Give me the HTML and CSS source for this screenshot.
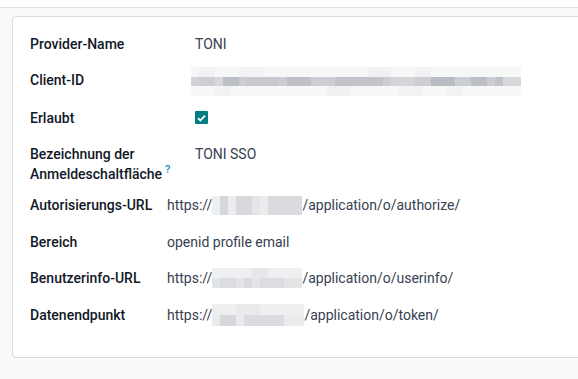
FILE: index.html
```html
<!DOCTYPE html>
<html lang="de">
<head>
    <meta charset="UTF-8">
    <meta name="viewport" content="width=device-width, initial-scale=1.0">
    <title>OAuth-Anbieter</title>
    <link rel="stylesheet" href="styles.css">
</head>
<body>
    <div class="topbar"></div>
    <div class="sheet">
        <div class="group group-main">
            <div class="label">Provider-Name</div>
            <div class="value">TONI</div>

            <div class="label">Client-ID</div>
            <div class="value">
                <svg class="blur-id" width="330" height="29" viewBox="0 0 330 29">
                    <rect x="0" y="0" width="330" height="10" fill="#f6f7f7"/>
                    <rect x="8" y="0" width="16" height="10" fill="#f1f2f3"/>
                    <rect x="48" y="0" width="24" height="10" fill="#f2f3f4"/>
                    <rect x="176" y="0" width="24" height="10" fill="#f0f1f2"/>
                    <rect x="224" y="0" width="16" height="10" fill="#f1f2f3"/>
                    <rect x="0" y="10" width="330" height="9" fill="#ccced3"/>
                    <rect x="0" y="10" width="8" height="9" fill="#d2d3d8"/>
                    <rect x="24" y="10" width="8" height="9" fill="#d8d9dd"/>
                    <rect x="32" y="10" width="16" height="9" fill="#bdc0c6"/>
                    <rect x="56" y="10" width="32" height="9" fill="#c6c8cd"/>
                    <rect x="96" y="10" width="24" height="9" fill="#bfc1c7"/>
                    <rect x="144" y="10" width="48" height="9" fill="#c2c4ca"/>
                    <rect x="200" y="10" width="24" height="9" fill="#d4d6da"/>
                    <rect x="240" y="10" width="24" height="9" fill="#b9bcc3"/>
                    <rect x="280" y="10" width="16" height="9" fill="#bdbfc6"/>
                    <rect x="304" y="10" width="16" height="9" fill="#c0c3c9"/>
                    <rect x="312" y="10" width="18" height="9" fill="#d6d8dc"/>
                    <rect x="0" y="19" width="330" height="10" fill="#f8f8f9"/>
                    <rect x="24" y="19" width="16" height="10" fill="#f2f3f4"/>
                    <rect x="136" y="19" width="24" height="10" fill="#f0f1f2"/>
                    <rect x="208" y="19" width="24" height="10" fill="#f1f2f3"/>
                    <rect x="256" y="19" width="16" height="10" fill="#f2f3f4"/>
                </svg>
            </div>

            <div class="label">Erlaubt</div>
            <div class="value">
                <span class="checkbox">
                    <svg width="9" height="8" viewBox="0 0 9 8"><path d="M1 4.2 3.4 6.4 8 1.6" fill="none" stroke="#fff" stroke-width="1.8"/></svg>
                </span>
            </div>

            <div class="label">Bezeichnung der Anmeldeschaltfläche<sup class="help">?</sup></div>
            <div class="value">TONI SSO</div>
        </div>

        <div class="group group-urls">
            <div class="label">Autorisierungs-URL</div>
            <div class="value">https://<svg class="blur-url" width="90" height="19" viewBox="0 0 90 19">
                    <rect width="90" height="19" fill="#e3e4e6"/>
                    <rect x="0" y="0" width="8" height="19" fill="#eeeff0"/>
                    <rect x="8" y="0" width="8" height="19" fill="#d6d7da"/>
                    <rect x="16" y="0" width="8" height="19" fill="#ebecee"/>
                    <rect x="24" y="0" width="16" height="19" fill="#d8d9dc"/>
                    <rect x="40" y="0" width="8" height="19" fill="#e4e5e7"/>
                    <rect x="48" y="0" width="8" height="19" fill="#ececee"/>
                    <rect x="56" y="0" width="34" height="19" fill="#dadbde"/>
                </svg>/application/o/authorize/</div>

            <div class="label">Bereich</div>
            <div class="value">openid profile email</div>

            <div class="label">Benutzerinfo-URL</div>
            <div class="value">https://<svg class="blur-url" width="90" height="20" viewBox="0 0 90 20">
                    <rect width="90" height="10" fill="#eeeff0"/>
                    <rect x="40" y="0" width="16" height="10" fill="#e6e7e9"/>
                    <rect x="0" y="10" width="90" height="10" fill="#e3e4e6"/>
                    <rect x="8" y="10" width="16" height="10" fill="#dcdde0"/>
                    <rect x="32" y="10" width="8" height="10" fill="#d9dadd"/>
                    <rect x="48" y="10" width="24" height="10" fill="#dcdde0"/>
                </svg>/application/o/userinfo/</div>

            <div class="label">Datenendpunkt</div>
            <div class="value">https://<svg class="blur-url" width="92" height="22" viewBox="0 0 92 22">
                    <rect width="92" height="11" fill="#eeeff0"/>
                    <rect x="24" y="0" width="24" height="11" fill="#e9eaeb"/>
                    <rect x="0" y="11" width="92" height="11" fill="#eaebec"/>
                    <rect x="8" y="11" width="16" height="11" fill="#d7d8db"/>
                    <rect x="32" y="11" width="40" height="11" fill="#dbdcdf"/>
                </svg>/application/o/token/</div>
        </div>
    </div>
</body>
</html>
```

FILE: styles.css
```css
*{
    padding: 0;
    margin: 0;
    box-sizing: border-box;
}
body{
    background: #f8f9fa;
    font-family: Roboto, "Noto Sans", sans-serif;
    font-size: 14px;
    line-height: 20px;
    color: #374151;
    overflow: hidden;
    height: 100vh;
}
.topbar{
    height: 8px;
    background: #fff;
    border-bottom: 1px solid #dee2e6;
}
.sheet{
    margin: 8px -8px 0 12px;
    background: #fff;
    border: 1px solid #d8dadd;
    border-radius: 4px;
    padding: 17px 17px 31px;
}
.group{
    display: grid;
    row-gap: 16px;
    align-items: start;
}
.group-main{
    grid-template-columns: 165px 1fr;
}
.group-urls{
    grid-template-columns: 137px 1fr;
    margin-top: 11px;
    row-gap: 16.5px;
}
.label{
    font-weight: 500;
    color: #111827;
    padding-right: 12px;
}
.value{
    white-space: nowrap;
}
.blur-id{
    display: block;
    margin: -3px 0 -4px -4px;
}
.blur-url{
    vertical-align: middle;
    margin-top: -2px;
}
.checkbox{
    display: inline-flex;
    align-items: center;
    justify-content: center;
    width: 13px;
    height: 13px;
    margin-top: 3px;
    background: #017e84;
    border-radius: 1px;
    vertical-align: top;
}
.help{
    color: #1a8fbf;
    font-size: 11px;
    margin-left: 3px;
    line-height: 0;
}
```
